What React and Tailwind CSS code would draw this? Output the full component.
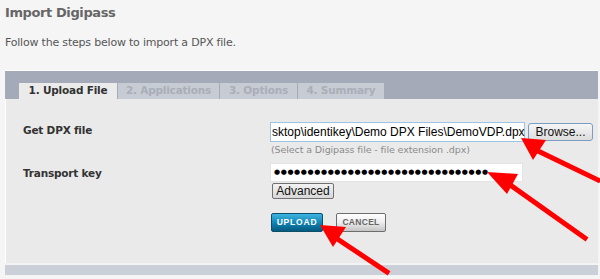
export default function App() {
  const tabs = ['2. Applications', '3. Options', '4. Summary']
  return (
    <div className="relative w-[600px] h-[279px] overflow-hidden bg-[#f5f5f5] font-['DejaVu_Sans',sans-serif]">
      <h1 className="pl-[5px] pt-[4px] text-[13px] leading-[18px] font-bold text-[#666] tracking-[-0.4px]">Import Digipass</h1>
      <p className="pl-[5px] mt-[14px] text-[11px] leading-[13px] text-[#555] tracking-[-0.2px]">Follow the steps below to import a DPX file.</p>

      {/* wizard panel */}
      <div className="ml-[5px] mr-[2px] mt-[21px] border-t border-white">
        <div className="h-[28px] bg-[#a4aab7] flex items-end pl-[14px] gap-[1px]">
          <div className="w-[98px] h-[16px] bg-[#ebebeb] flex items-center justify-center text-[10.5px] font-bold text-[#333] tracking-[-0.2px]">1. Upload File</div>
          {tabs.map((t, i) => (
            <div
              key={t}
              className={`h-[16px] bg-[#c7cbd4] flex items-center justify-center text-[10.5px] font-bold text-[#a9aeb8] tracking-[-0.2px] ${i === 0 ? 'w-[101px]' : i === 1 ? 'w-[77px]' : 'w-[86px]'}`}
            >
              {t}
            </div>
          ))}
        </div>

        <div className="h-[164px] bg-[#eaeaea] border-l border-white flex">
          <div className="w-[264px] pl-[17px] text-[10.5px] font-bold text-[#333] tracking-[-0.2px]">
            <div className="mt-[24px]">Get DPX file</div>
            <div className="mt-[27px]">Transport key</div>
          </div>
          <div className="flex flex-col font-['Liberation_Sans',sans-serif]">
            <div className="mt-[23px] flex items-center">
              <div className="w-[255px] h-[20px] bg-white border border-[#9fc3e0] flex items-center pl-[1px] text-[12px] text-black whitespace-nowrap">
                sktop\identikey\Demo DPX Files\DemoVDP.dpx
              </div>
              <div className="ml-[3px] w-[65px] h-[18px] rounded-[3px] border border-[#7a9cc0] bg-gradient-to-b from-[#f6f6f6] to-[#dcdcdc] text-[12px] text-[#111] flex items-center justify-center">Browse...</div>
            </div>
            <div className="mt-[2px] pl-[1px] text-[9.5px] text-[#8a8a8a] leading-[12px] font-['DejaVu_Sans',sans-serif] tracking-[-0.1px]">(Select a Digipass file - file extension .dpx)</div>
            <div className="mt-[7px] w-[253px] h-[19px] bg-white border border-[#e4e4e4] flex items-center pl-[3px] text-[7px] tracking-[0.6px] text-black whitespace-nowrap font-['DejaVu_Sans',sans-serif]">
              {'●'.repeat(32)}
            </div>
            <div className="mt-[1px] ml-[2px] w-[62px] h-[16px] bg-gradient-to-b from-[#f2f2f2] to-[#d8d8d8] border border-[#707070] rounded-[2px] text-[12px] text-[#111] flex items-center justify-center">Advanced</div>
            <div className="mt-[14px] ml-[1px] flex gap-[13px]">
              <div className="w-[52px] h-[19px] rounded-[2px] border border-[#0c4f6c] bg-gradient-to-b from-[#3db3e0] via-[#1186b8] to-[#06597e] text-white text-[8.5px] font-bold tracking-[0.8px] flex items-center justify-center">UPLOAD</div>
              <div className="w-[50px] h-[19px] rounded-[2px] border border-[#6d6d6d] bg-gradient-to-b from-white via-[#ededed] to-[#c4c4c4] text-[#666] text-[8.5px] font-bold tracking-[0.3px] flex items-center justify-center">CANCEL</div>
            </div>
          </div>
        </div>

        <div className="h-[2px] bg-[#f3f3f3]" />
        <div className="h-[10px] bg-[#cbcfd8]" />
      </div>

      {/* red annotation arrows */}
      <svg className="absolute inset-0 pointer-events-none" width="600" height="279" viewBox="0 0 600 279">
        <g fill="#ff0000" stroke="#ff0000" strokeLinecap="square">
          <line x1="536" y1="150" x2="598" y2="180" strokeWidth="5" />
          <polygon points="521,138 546,140 533,160" stroke="none" />
          <line x1="506" y1="182" x2="585" y2="238" strokeWidth="5" />
          <polygon points="487,172 518,174 507,194" stroke="none" />
          <line x1="330" y1="234" x2="387" y2="272" strokeWidth="5" />
          <polygon points="320,225 346,227 333,247" stroke="none" />
        </g>
      </svg>
    </div>
  )
}
